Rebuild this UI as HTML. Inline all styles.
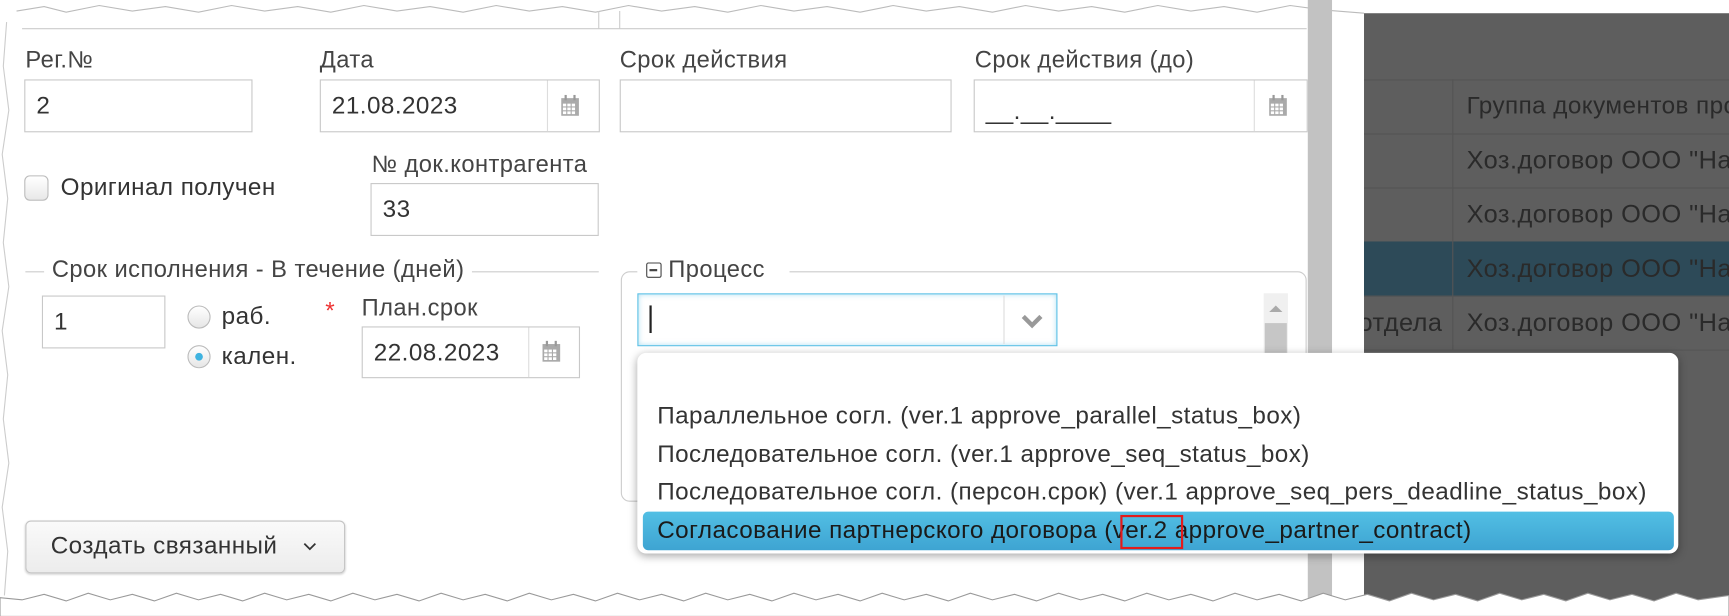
<!DOCTYPE html>
<html><head><meta charset="utf-8"><style>
html,body{margin:0;padding:0;background:#fff;width:1729px;height:616px;overflow:hidden}
#w{position:absolute;left:0;top:0;width:1568px;height:559px;transform:scale(1.10268);transform-origin:0 0;font-family:"Liberation Sans",sans-serif;color:#333;letter-spacing:.4px}
.a{position:absolute}
.lbl{position:absolute;font-size:21.5px;color:#444;white-space:nowrap}
.inp{position:absolute;border:1px solid #c8c8c8;background:#fff;box-sizing:border-box;font-size:22px;padding-left:10px;display:flex;align-items:center;color:#333}
.div{position:absolute;top:0;bottom:0;width:1px;background:#ddd}
.cal{position:absolute;width:18px;height:20px}
.row{position:absolute;left:1237px;width:331px;height:49px;border-bottom:1px solid #555;font-size:23px;color:#2a2a2a;overflow:hidden}
.row span{position:absolute;left:93px;top:11px;white-space:nowrap}
.item{position:absolute;left:18px;font-size:22px;color:#333;white-space:nowrap}
</style></head><body><div id="w">
<svg class="a" style="left:0;top:0" width="1568" height="30"><line x1="20" y1="26" x2="1185" y2="26" stroke="#ccc"/><polyline points="15,10 40,6 60,11 90,5 120,10 150,6 180,11 210,5 240,10 270,6 300,11 330,5 360,10 390,6 420,11 450,5 480,10 510,6 540,11 570,5 600,10 630,6 660,11 690,5 720,10 750,6 780,11 810,5 840,10 870,6 900,11 930,5 960,10 990,6 1020,11 1050,5 1080,10 1110,6 1140,11 1170,5 1200,9 1237,12" fill="none" stroke="#bbb" stroke-width="1"/><line x1="543" y1="10" x2="543" y2="26" stroke="#ccc"/><line x1="562" y1="10" x2="562" y2="26" stroke="#ccc"/></svg>
<div class="a" style="left:1186px;top:0;width:22px;height:548px;background:#c2c2c2"></div>
<div class="a" style="left:1237px;top:12px;width:331px;height:536px;background:#5e5e5e"></div>
<div class="a" style="left:1237px;top:72px;width:331px;height:245px;border-top:1px solid #555"></div>
<div class="a" style="left:1317px;top:72px;width:1px;height:245px;background:#555"></div>
<div class="row" style="top:72px"><span style="font-size:22px">Группа документов про</span></div>
<div class="row" style="top:121px"><span>Хоз.договор ООО "На</span></div>
<div class="row" style="top:170px"><span>Хоз.договор ООО "На</span></div>
<div class="row" style="top:219px;background:#2d4a58"><span>Хоз.договор ООО "На</span></div>
<div class="row" style="top:268px"><span>Хоз.договор ООО "На</span><span style="left:-5px">отдела</span></div>
<div class="a" style="left:1317px;top:72px;width:1px;height:245px;background:#555"></div>

<div class="lbl" style="left:23px;top:42px">Рег.№</div>
<div class="lbl" style="left:290px;top:42px">Дата</div>
<div class="lbl" style="left:562px;top:42px">Срок действия</div>
<div class="lbl" style="left:884px;top:42px">Срок действия (до)</div>
<div class="inp" style="left:22px;top:72px;width:207px;height:48px">2</div>
<div class="inp" style="left:290px;top:72px;width:254px;height:48px">21.08.2023<div class="div" style="left:205px"></div>
<svg class="cal" style="left:217px;top:13px" viewBox="0 0 18 20"><rect x="1" y="3" width="16" height="16" fill="#aaa"/><g fill="#fff"><rect x="2.5" y="8" width="3" height="2.5"/><rect x="6.5" y="8" width="3" height="2.5"/><rect x="10.5" y="8" width="3" height="2.5"/><rect x="2.5" y="11.5" width="3" height="2.5"/><rect x="6.5" y="11.5" width="3" height="2.5"/><rect x="10.5" y="11.5" width="3" height="2.5"/><rect x="2.5" y="15" width="3" height="2.5"/><rect x="6.5" y="15" width="3" height="2.5"/><rect x="10.5" y="15" width="3" height="2.5"/></g><rect x="4" y="0" width="2" height="5" fill="#999"/><rect x="12" y="0" width="2" height="5" fill="#999"/></svg></div>
<div class="inp" style="left:562px;top:72px;width:301px;height:48px"></div>
<div class="inp" style="left:883px;top:72px;width:303px;height:48px;padding-top:10px">__.__.____<div class="div" style="left:253px"></div>
<svg class="cal" style="left:266px;top:13px" viewBox="0 0 18 20"><rect x="1" y="3" width="16" height="16" fill="#aaa"/><g fill="#fff"><rect x="2.5" y="8" width="3" height="2.5"/><rect x="6.5" y="8" width="3" height="2.5"/><rect x="10.5" y="8" width="3" height="2.5"/><rect x="2.5" y="11.5" width="3" height="2.5"/><rect x="6.5" y="11.5" width="3" height="2.5"/><rect x="10.5" y="11.5" width="3" height="2.5"/><rect x="2.5" y="15" width="3" height="2.5"/><rect x="6.5" y="15" width="3" height="2.5"/><rect x="10.5" y="15" width="3" height="2.5"/></g><rect x="4" y="0" width="2" height="5" fill="#999"/><rect x="12" y="0" width="2" height="5" fill="#999"/></svg></div>

<div class="a" style="left:22px;top:159px;width:22px;height:23px;border:1px solid #bbb;border-radius:5px;box-sizing:border-box;background:linear-gradient(#fff,#e8e8e8)"></div>
<div class="lbl" style="left:55px;top:157px;font-size:22px;color:#333">Оригинал получен</div>
<div class="lbl" style="left:337px;top:137px">№ док.контрагента</div>
<div class="inp" style="left:336px;top:166px;width:207px;height:48px">33</div>

<div class="a" style="left:23px;top:246px;width:520px;height:1px;background:#ccc"></div>
<div class="lbl" style="left:40px;top:232px;background:#fff;padding:0 7px">Срок исполнения - В течение (дней)</div>
<div class="inp" style="left:38px;top:268px;width:112px;height:48px">1</div>
<div class="a" style="left:170px;top:277px;width:21px;height:21px;border:1px solid #bbb;border-radius:50%;box-sizing:border-box;background:linear-gradient(#fff,#e6e6e6)"></div>
<div class="a" style="left:170px;top:313px;width:21px;height:21px;border:1px solid #bbb;border-radius:50%;box-sizing:border-box;background:linear-gradient(#fff,#e6e6e6)"><div class="a" style="left:6px;top:6px;width:7px;height:7px;border-radius:50%;background:#3fb3e0"></div></div>
<div class="lbl" style="left:201px;top:274px;font-size:22px;color:#333">раб.</div>
<div class="lbl" style="left:201px;top:310px;font-size:22px;color:#333">кален.</div>
<div class="lbl" style="left:295px;top:269px;color:#e33;font-size:22px">*</div>
<div class="lbl" style="left:328px;top:267px">План.срок</div>
<div class="inp" style="left:328px;top:296px;width:198px;height:47px">22.08.2023<div class="div" style="left:150px"></div>
<svg class="cal" style="left:162px;top:12px" viewBox="0 0 18 20"><rect x="1" y="3" width="16" height="16" fill="#aaa"/><g fill="#fff"><rect x="2.5" y="8" width="3" height="2.5"/><rect x="6.5" y="8" width="3" height="2.5"/><rect x="10.5" y="8" width="3" height="2.5"/><rect x="2.5" y="11.5" width="3" height="2.5"/><rect x="6.5" y="11.5" width="3" height="2.5"/><rect x="10.5" y="11.5" width="3" height="2.5"/><rect x="2.5" y="15" width="3" height="2.5"/><rect x="6.5" y="15" width="3" height="2.5"/><rect x="10.5" y="15" width="3" height="2.5"/></g><rect x="4" y="0" width="2" height="5" fill="#999"/><rect x="12" y="0" width="2" height="5" fill="#999"/></svg></div>

<div class="a" style="left:23px;top:472px;width:290px;height:48px;border:1px solid #c4c4c4;border-radius:5px;box-sizing:border-box;background:linear-gradient(#fafafa,#ececec);box-shadow:0 1px 2px rgba(0,0,0,.2)"></div>
<div class="lbl" style="left:46px;top:482px;font-size:22px;color:#333">Создать связанный</div>
<svg class="a" style="left:275px;top:492px" width="12" height="8"><polyline points="1,1 6,6 11,1" fill="none" stroke="#333" stroke-width="1.6"/></svg>

<div class="a" style="left:563px;top:246px;width:622px;height:209px;border:1px solid #ccc;border-radius:8px;box-sizing:border-box"></div>
<div class="a" style="left:578px;top:234px;background:#fff;height:24px;width:138px"></div>
<div class="a" style="left:586px;top:238px;width:14px;height:14px;border:1.5px solid #444;border-radius:2px;box-sizing:border-box"><div class="a" style="left:2px;top:5px;width:7px;height:1.5px;background:#444"></div></div>
<div class="lbl" style="left:606px;top:232px">Процесс</div>
<div class="a" style="left:578px;top:266px;width:381px;height:48px;border:1px solid #5bc0e6;box-sizing:border-box;box-shadow:inset 0 0 5px rgba(91,192,230,.5);background:#fff"><div class="a" style="left:10px;top:10px;width:1.5px;height:25px;background:#222"></div><div class="a" style="left:331px;top:1px;bottom:1px;width:1px;background:#ddd"></div>
<svg class="a" style="left:347px;top:18px" width="20" height="13"><polyline points="2,2 10,10 18,2" fill="none" stroke="#999" stroke-width="4"/></svg></div>
<div class="a" style="left:1146px;top:266px;width:22px;height:190px;background:#f0f0f0"></div>
<div class="a" style="left:1147px;top:293px;width:20px;height:163px;background:#c6c6c6"></div>
<svg class="a" style="left:1150px;top:275px" width="14" height="10"><polygon points="1,8 7,2 13,8" fill="#aaa"/></svg>

<div class="a" style="left:578px;top:320px;width:944px;height:182px;background:#fff;border-radius:8px;box-shadow:0 2px 8px rgba(0,0,0,.35)">
<div class="item" style="top:44px">Параллельное согл. (ver.1 approve_parallel_status_box)</div>
<div class="item" style="top:79px">Последовательное согл. (ver.1 approve_seq_status_box)</div>
<div class="item" style="top:113px">Последовательное согл. (персон.срок) (ver.1 approve_seq_pers_deadline_status_box)</div>
<div class="a" style="left:5px;top:144px;width:935px;height:35px;border-radius:5px;background:linear-gradient(#52bfe4,#3ea4d2)"></div>
<div class="item" style="top:148px;color:#1a1a1a">Согласование партнерского договора (ver.2 approve_partner_contract)</div>
<div class="a" style="left:438px;top:147px;width:57px;height:31px;border:2px solid #e31b1b;box-sizing:border-box"></div>
</div>

<svg class="a" style="left:0;top:530px" width="1568" height="29"><polygon points="0,29 0,12 20,14 40,9 60,15 80,8 100,14 120,9 140,15 160,8 180,14 200,9 220,15 240,8 260,14 280,9 300,15 320,8 340,14 360,9 380,15 400,8 420,14 440,9 460,15 480,8 500,14 520,9 540,15 560,8 580,14 600,9 620,15 640,8 660,14 680,9 700,15 720,8 740,14 760,9 780,15 800,8 820,14 840,9 860,15 880,8 900,14 920,9 940,15 960,8 980,14 1000,9 1020,15 1040,8 1060,14 1080,9 1100,15 1120,8 1140,14 1160,9 1180,15 1200,8 1220,14 1240,9 1260,15 1280,8 1300,14 1320,9 1340,15 1360,8 1380,14 1400,9 1420,15 1440,8 1460,14 1480,9 1500,15 1520,8 1540,14 1568,10 1568,29" fill="#fff" stroke="#999" stroke-width="1"/></svg>
<svg class="a" style="left:0;top:0" width="14" height="559"><polyline points="6,20 3,60 8,100 2,140 7,180 3,220 8,260 2,300 7,340 3,380 8,420 2,460 7,500 4,540" fill="none" stroke="#ccc"/></svg>
</div></body></html>
